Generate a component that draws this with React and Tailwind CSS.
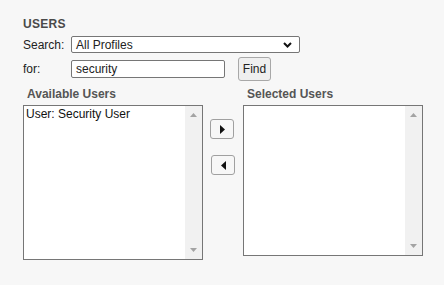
import React from 'react';

function Triangle({ dir }) {
    const d = dir === 'right' ? 'M0 0 L5 4.5 L0 9 Z' : 'M5 0 L0 4.5 L5 9 Z';
    return (
        <svg width="5" height="9" viewBox="0 0 5 9">
            <path d={d} fill="#111" />
        </svg>
    );
}

function ScrollTrack() {
    return (
        <div className="w-[17px] h-full bg-[#f1f1f1] flex flex-col items-center justify-between py-[7px]">
            <svg width="7" height="4" viewBox="0 0 7 4">
                <path d="M0 4 L3.5 0 L7 4 Z" fill="#a3a3a3" />
            </svg>
            <svg width="7" height="4" viewBox="0 0 7 4">
                <path d="M0 0 L3.5 4 L7 0 Z" fill="#a3a3a3" />
            </svg>
        </div>
    );
}

function ListBox({ height, items }) {
    return (
        <div className="w-[180px] border border-[#767676] bg-white flex" style={{ height }}>
            <div className="flex-1 pl-[2px] pt-[1px] text-[12px] leading-[14px] text-[#111]">
                {items.map(item => (
                    <div key={item}>{item}</div>
                ))}
            </div>
            <ScrollTrack />
        </div>
    );
}

export default function App() {
    return (
        <div className="w-[444px] h-[285px] bg-[#f7f7f7] pl-[23px] pt-[17px] font-['Liberation_Sans',Arial,sans-serif] text-[12px] text-[#222]">
            <div className="h-[14px] leading-[14px] font-bold text-[#4a4a4a] tracking-[0.3px]">USERS</div>

            <div className="mt-[5px] flex items-center h-[17px]">
                <span className="w-[48px]">Search:</span>
                <div className="w-[229px] h-[17px] border border-[#767676] rounded-[2px] bg-white flex items-center justify-between pl-[4px] pr-[7px]">
                    <span>All Profiles</span>
                    <svg width="9" height="6" viewBox="0 0 9 6">
                        <path d="M1 1 L4.5 4.5 L8 1" stroke="#111" strokeWidth="2" fill="none" />
                    </svg>
                </div>
            </div>

            <div className="mt-[4px] flex items-center h-[24px]">
                <span className="w-[48px]">for:</span>
                <div className="w-[154px] h-[18px] border border-[#767676] rounded-[2px] bg-white flex items-center pl-[4px]">
                    security
                </div>
                <button className="ml-[13px] w-[33px] h-[24px] border border-[#a8a8a8] rounded-[3px] bg-[#efefef] text-[12px] text-[#222]">
                    Find
                </button>
            </div>

            <div className="mt-[6px] flex h-[14px] leading-[14px] font-bold text-[#555]">
                <span className="w-[220px] pl-[4px]">Available Users</span>
                <span className="pl-[4px]">Selected Users</span>
            </div>

            <div className="mt-[4px] flex items-start">
                <ListBox height={155} items={['User: Security User']} />
                <div className="w-[40px] pt-[14px] flex flex-col gap-[16px] pl-[7px]">
                    <button className="w-[24px] h-[20px] border border-[#a0a0a0] rounded-[3px] bg-[#f7f7f7] flex items-center justify-center">
                        <Triangle dir="right" />
                    </button>
                    <button className="ml-[1px] w-[24px] h-[20px] border border-[#a0a0a0] rounded-[3px] bg-[#f7f7f7] flex items-center justify-center">
                        <Triangle dir="left" />
                    </button>
                </div>
                <ListBox height={151} items={[]} />
            </div>
        </div>
    );
}
